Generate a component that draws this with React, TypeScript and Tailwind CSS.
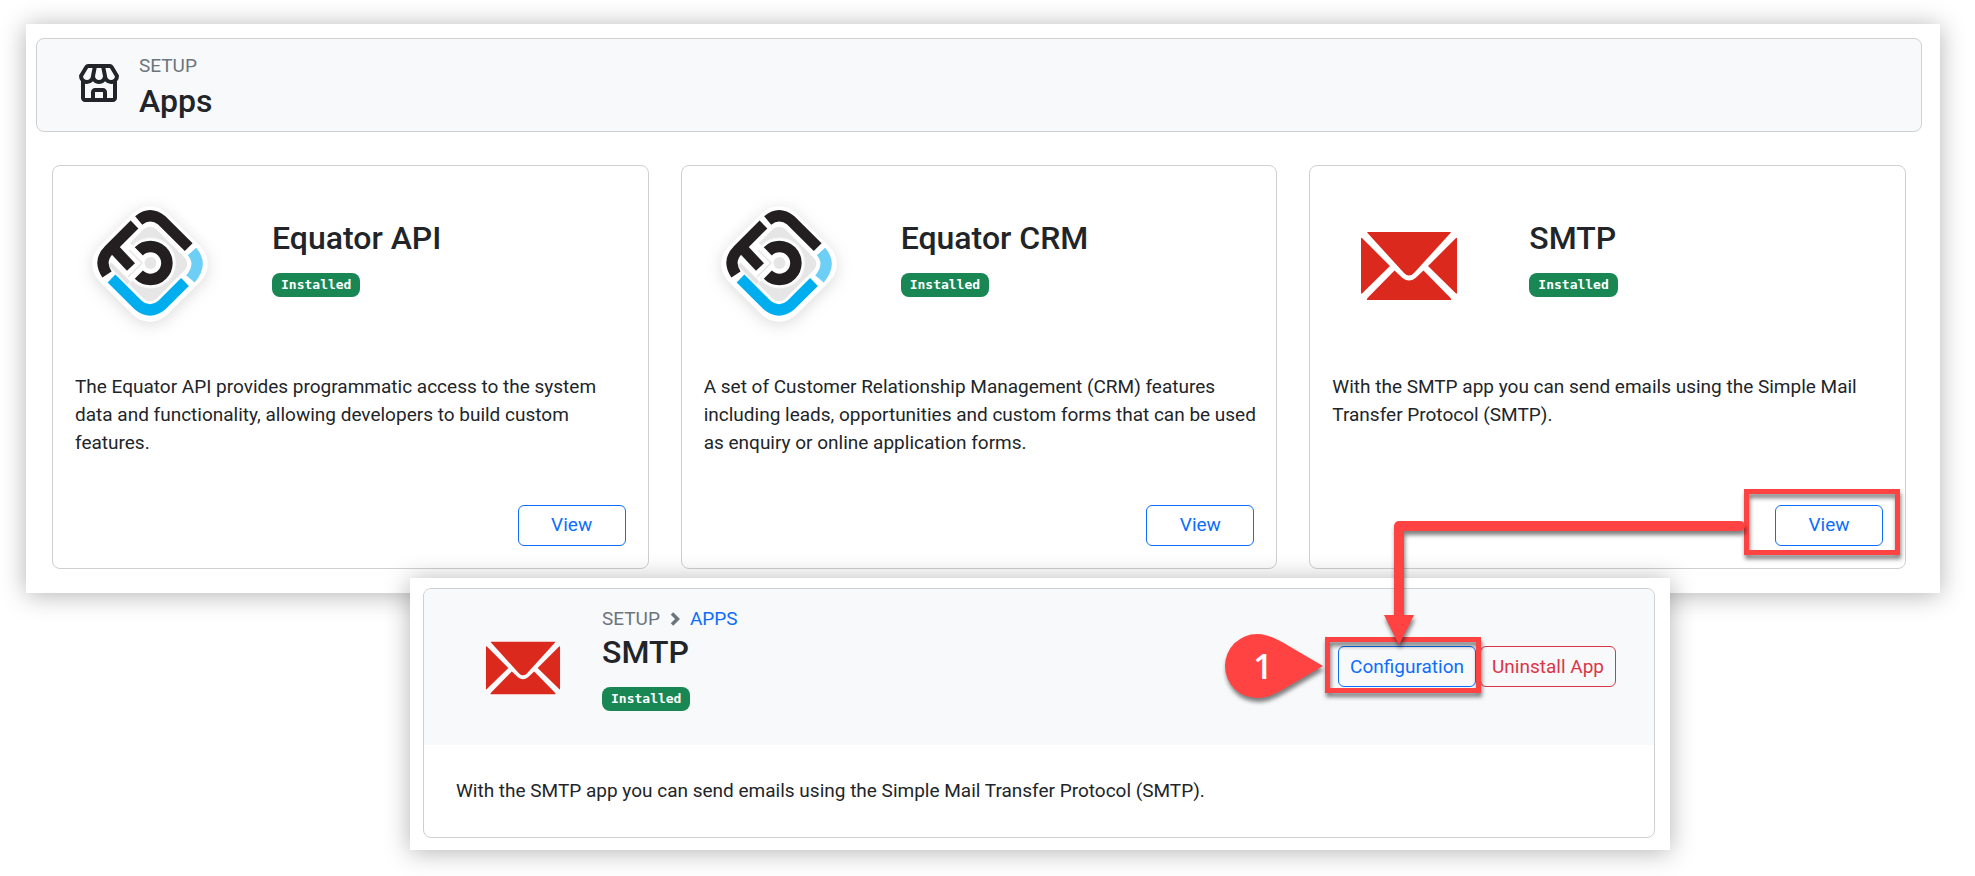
import type { ReactNode } from "react";
import { BiStore } from "react-icons/bi";

type App = { name: string; description: string; logo: "equator" | "mail" };

const apps: App[] = [
  { name: "Equator API", logo: "equator", description: "The Equator API provides programmatic access to the system data and functionality, allowing developers to build custom features." },
  { name: "Equator CRM", logo: "equator", description: "A set of Customer Relationship Management (CRM) features including leads, opportunities and custom forms that can be used as enquiry or online application forms." },
  { name: "SMTP", logo: "mail", description: "With the SMTP app you can send emails using the Simple Mail Transfer Protocol (SMTP)." },
];

function EquatorLogo() {
  return (
    <svg className="h-[150px] w-[150px] overflow-visible" viewBox="1 1 150 150" fill="none" aria-hidden="true">
      <defs>
        <filter id="equator-shadow" x="-30%" y="-30%" width="160%" height="160%">
          <feDropShadow dx="0" dy="3" stdDeviation="8" floodColor="#000" floodOpacity="0.14" />
        </filter>
      </defs>
      <g filter="url(#equator-shadow)">
        <rect x="28.3" y="29.3" width="95.4" height="95.4" rx="24" transform="rotate(45 76 77)" fill="#fff" />
      </g>
      <rect x="47" y="48" width="58" height="58" rx="9" transform="rotate(45 76 77)" fill="#e6e6e6" />
      <circle cx="76.500" cy="76" r="25.500" fill="#f7f7f7" />
      <circle cx="76.500" cy="76" r="24" fill="#fff" />
      <path d="M38 58L48 48L76 76L54 98L38 82Z" fill="#fff" />
      <path d="M36 77L55 96" stroke="#e3e3e3" strokeWidth="4" />
      <path d="M54 90L68 76L55 63" stroke="#e6e6e6" strokeWidth="1.500" />
      <circle cx="76.500" cy="76" r="6" fill="#e6e6e6" />
      <path d="M64.800 64.300A16.500 16.500 0 1 1 64.800 87.700" stroke="#231f20" strokeWidth="11.500" />
      <path d="M64.700 33.500Q76 24 88 33.500L114.700 60.200" stroke="#231f20" strokeWidth="11" />
      <path d="M60.500 37.500L35 63Q24 74 33 87.500" stroke="#231f20" strokeWidth="11" />
      <path d="M41.500 63.500L57 80" stroke="#231f20" strokeWidth="11" />
      <path d="M118 64.500Q129 77 116.500 92" stroke="#6dcff6" strokeWidth="11" />
      <path d="M37.500 91.500L64 118Q76 128 88 118L111 95" stroke="#00aeef" strokeWidth="11" />
    </svg>
  );
}

function MailLogo({ className }: { className: string }) {
  return (
    <svg className={className} viewBox="0 0 98 70" fill="#dc291e" aria-hidden="true">
      <path d="M8 1Q6.500 1 7.500 2L44 42Q49 47 54 42L90.500 2Q91.500 1 90 1Z" />
      <path d="M1 8Q1 6 2.500 7.500L30 35L2.500 62Q1 63.500 1 62Z" />
      <path d="M97 8Q97 6 95.500 7.500L68 35L95.500 62Q97 63.500 97 62Z" />
      <path d="M34.500 39.500L7.500 67Q6 69 8 69H90Q92 69 90.500 67L63.500 39.500L55.500 47Q49 52 42.500 47Z" />
    </svg>
  );
}

function InstalledBadge() {
  return (
    <span className="inline-flex h-6 items-center rounded-lg bg-[#198754] px-[9px] font-['DejaVu_Sans_Mono',monospace] text-[13px] font-bold text-white">
      Installed
    </span>
  );
}

// Red rectangle drawn round a control
function Highlight({ className }: { className: string }) {
  return <div className={`pointer-events-none absolute border-[5px] border-[#ff4343] drop-shadow-[1px_4px_2px_rgba(0,0,0,0.5)] ${className}`} />;
}

function Sheet({ className, children }: { className: string; children: ReactNode }) {
  return <div className={`bg-white shadow-[0_2px_24px_rgba(0,0,0,0.3)] ${className}`}>{children}</div>;
}

function AppCard({ app }: { app: App }) {
  return (
    <section className="flex min-h-[404px] flex-col rounded-lg border border-[#ced0d2] px-[22px] pb-[22px]">
      <div className="flex">
        <div className="mt-[22px] flex h-[150px] w-[150px] shrink-0 items-center justify-center">
          {app.logo === "equator" ? <EquatorLogo /> : <MailLogo className="ml-1 mt-[6px] h-[70px] w-[98px]" />}
        </div>
        <div className="ml-[47px] mt-[53px]">
          <h2 className="text-[32px] font-medium leading-[38px]">{app.name}</h2>
          <div className="mt-4 flex">
            <InstalledBadge />
          </div>
        </div>
      </div>
      <p className="-mr-2 mt-[35px]">{app.description}</p>
      <div className="relative mt-auto self-end">
        <button type="button" className="h-[41px] w-[108px] rounded-md border border-[#0d6efd] pb-0.5 text-[#0d6efd]">
          View
        </button>
        {app.logo === "mail" && <Highlight className="-bottom-[9px] -left-[31px] -right-[17px] -top-4" />}
      </div>
    </section>
  );
}

function StepMarker() {
  return (
    <div className="absolute -left-[113px] -top-3 h-16 w-[98px]">
      <svg className="h-full w-full overflow-visible drop-shadow-[1px_4px_2px_rgba(0,0,0,0.5)]" viewBox="0 0 98 64" aria-hidden="true">
        <path d="M98 32L57 56Q43 64 32 64A32 32 0 0 1 32 0Q43 0 57 8Z" fill="#ff4343" />
      </svg>
      <span className="absolute inset-y-0 left-0 flex w-[76px] items-center justify-center font-['Open_Sans',sans-serif] text-[34px] font-semibold text-white">1</span>
    </div>
  );
}

function FlowArrow() {
  return (
    <svg className="pointer-events-none absolute bottom-full right-[-270px] mb-[1px] h-[126px] w-[362px] overflow-visible drop-shadow-[1px_4px_2px_rgba(0,0,0,0.5)]" viewBox="0 0 362 126" aria-hidden="true">
      <path d="M356 7H15V98" fill="none" stroke="#ff4343" strokeWidth="10" strokeLinecap="round" strokeLinejoin="round" />
      <path d="M0 96H30L15 126Z" fill="#ff4343" />
    </svg>
  );
}

export default function App() {
  return (
    <main className="min-h-screen bg-white pb-6 pt-6 font-[Roboto,sans-serif] text-[19px] leading-7 text-[#212529]">
      <Sheet className="ml-[26px] mr-[35px] pb-6 pl-[10px] pr-[18px] pt-[14px]">
        <header className="flex h-[94px] items-start rounded-lg border border-[#ced0d2] bg-[#f8f9fb] pl-[38px] pt-[13px]">
          <BiStore className="mt-2 h-12 w-12" />
          <div className="ml-4">
            <p className="text-[#6c757d]">SETUP</p>
            <h1 className="mt-0.5 text-[32px] font-medium leading-[38px]">Apps</h1>
          </div>
        </header>
        <div className="mt-[33px] grid grid-cols-3 gap-8 px-4">
          {apps.map((app) => (
            <AppCard key={app.name} app={app} />
          ))}
        </div>
      </Sheet>

      <Sheet className="relative -mt-[15px] ml-[410px] mr-[305px] pb-3 pl-[13px] pr-[15px] pt-[10px]">
        <section className="rounded-lg border border-[#ced0d2]">
          <div className="flex items-start rounded-t-lg bg-[#f8f9fb] pb-[34px] pl-[61px] pr-[38px] pt-4">
            <MailLogo className="mt-9 h-[54px] w-[76px]" />
            <div className="ml-[41px]">
              <nav className="flex items-center text-[#6c757d]">
                SETUP
                <svg className="mx-[10px] h-[14px] w-[10px]" viewBox="0 0 10 14" aria-hidden="true">
                  <path d="M2 1.500L7.500 7L2 12.500" fill="none" stroke="currentColor" strokeWidth="3.500" />
                </svg>
                <a href="#apps" className="text-[#0d6efd]">APPS</a>
              </nav>
              <h2 className="text-[32px] font-medium leading-[38px]">SMTP</h2>
              <div className="mt-4 flex">
                <InstalledBadge />
              </div>
            </div>
            <div className="ml-auto mt-[41px] flex gap-1">
              <div className="relative">
                <button type="button" className="h-[41px] rounded-md border border-[#0d6efd] px-[11px] text-[#0d6efd]">
                  Configuration
                </button>
                <Highlight className="-bottom-[6px] -left-[13px] -right-[5px] -top-[9px]" />
                <FlowArrow />
                <StepMarker />
              </div>
              <button type="button" className="h-[41px] rounded-md border border-[#dc3545] px-[11px] text-[#dc3545]">
                Uninstall App
              </button>
            </div>
          </div>
          <p className="px-8 pb-8 pt-8">With the SMTP app you can send emails using the Simple Mail Transfer Protocol (SMTP).</p>
        </section>
      </Sheet>
    </main>
  );
}
